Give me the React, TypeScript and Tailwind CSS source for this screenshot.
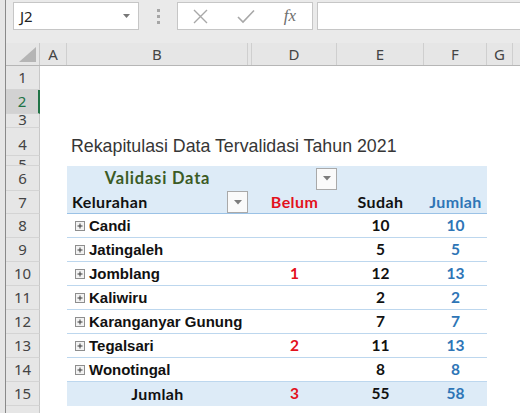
import React from 'react';

type PivotRow = { name: string; belum: string; sudah: string; jumlah: string };

const DATA: PivotRow[] = [
  { name: 'Candi', belum: '', sudah: '10', jumlah: '10' },
  { name: 'Jatingaleh', belum: '', sudah: '5', jumlah: '5' },
  { name: 'Jomblang', belum: '1', sudah: '12', jumlah: '13' },
  { name: 'Kaliwiru', belum: '', sudah: '2', jumlah: '2' },
  { name: 'Karanganyar Gunung', belum: '', sudah: '7', jumlah: '7' },
  { name: 'Tegalsari', belum: '2', sudah: '11', jumlah: '13' },
  { name: 'Wonotingal', belum: '', sudah: '8', jumlah: '8' },
];

const uiFont = { fontFamily: '"Noto Sans", "Open Sans", sans-serif' };
const calibri = { fontFamily: 'Lato, "Noto Sans", sans-serif' };
const arial = { fontFamily: '"Liberation Sans", Arial, sans-serif' };

const PIVOT = 'grid grid-cols-[181px_4px_85px_87px_63px] w-[420px]';

function RowHead({ n, selected, align = 'items-center' }: { n: number; selected?: boolean; align?: string }) {
  return (
    <div
      className={`w-[34px] shrink-0 flex justify-center overflow-hidden border-b border-[#d4d4d4] text-[15px] leading-none ${align} ${
        selected ? 'bg-[#d2d2d2] text-[#217346] border-r-2 border-r-[#217346]' : 'bg-[#e6e6e6] text-[#444] border-r border-r-[#c8c8c8]'
      }`}
      style={uiFont}
    >
      {n}
    </div>
  );
}

function DropButton() {
  return (
    <div className="w-[21px] h-[22px] border border-[#a9a9a9] bg-[#fafafa] flex items-center justify-center">
      <svg width="8" height="5" viewBox="0 0 8 5">
        <path d="M0 0h8L4 4.5z" fill="#7c7c7c" />
      </svg>
    </div>
  );
}

function PlusBox() {
  return (
    <svg width="10" height="10" viewBox="0 0 10 10" className="shrink-0">
      <rect x="0.5" y="0.5" width="9" height="9" fill="#f2f2f2" stroke="#8e8e8e" />
      <path d="M2.5 5h5M5 2.5v5" stroke="#3a3a3a" strokeWidth="1" />
    </svg>
  );
}

function EmptyRow({ n, h, selected, align }: { n: number; h: string; selected?: boolean; align?: string }) {
  return (
    <div className={`flex ${h}`}>
      <RowHead n={n} selected={selected} align={align} />
      <div className="flex-1 bg-white" />
    </div>
  );
}

function Toolbar() {
  return (
    <div className="h-[43px] bg-[#eaeaea] flex items-start pt-[2px]">
      <div className="ml-[7px] w-[126px] h-[28px] bg-white border border-[#c6c6c6] flex items-center justify-between pl-[6px] pr-[8px]">
        <span className="text-[15px] text-[#222]" style={uiFont}>J2</span>
        <svg width="7" height="4" viewBox="0 0 7 4">
          <path d="M0 0h7L3.5 4z" fill="#777" />
        </svg>
      </div>
      <div className="w-[38px] h-[28px] flex flex-col items-center justify-center gap-[3px]">
        <span className="w-[3px] h-[3px] bg-[#a6a6a6]" />
        <span className="w-[3px] h-[3px] bg-[#a6a6a6]" />
        <span className="w-[3px] h-[3px] bg-[#a6a6a6]" />
      </div>
      <div className="w-[136px] h-[28px] bg-white border border-[#c6c6c6] flex items-center">
        <div className="w-[45px] flex justify-center">
          <svg width="15" height="15" viewBox="0 0 15 15">
            <path d="M1 1l13 13M14 1L1 14" stroke="#a8a8a8" strokeWidth="1.4" />
          </svg>
        </div>
        <div className="w-[45px] flex justify-center">
          <svg width="18" height="15" viewBox="0 0 18 15">
            <path d="M1 8l5 5L17 1.5" stroke="#a8a8a8" strokeWidth="1.6" fill="none" />
          </svg>
        </div>
        <div className="w-[44px] flex justify-center">
          <span className="italic text-[17px] text-[#6e6e6e]" style={{ fontFamily: '"Liberation Serif", serif' }}>
            fx
          </span>
        </div>
      </div>
      <div className="ml-[4px] flex-1 h-[28px] bg-white border border-[#c6c6c6] border-r-0" />
    </div>
  );
}

function ColumnHeader() {
  const cell = 'h-full flex items-center justify-center border-r border-[#cfcfcf] text-[15px] text-[#444]';
  return (
    <div className="flex h-[23px] bg-[#e6e6e6] border-b border-[#b6b6b6]" style={uiFont}>
      <div className="w-[34px] h-full flex items-end justify-end pr-[3px] pb-[3px] border-r border-[#c8c8c8]">
        <svg width="17" height="15" viewBox="0 0 17 15">
          <path d="M17 0v15H0z" fill="#b5b5b5" />
        </svg>
      </div>
      <div className={`w-[27px] ${cell}`}>A</div>
      <div className={`w-[181px] ${cell}`}>B</div>
      <div className="w-[4px] h-full border-r border-[#cfcfcf]" />
      <div className={`w-[85px] ${cell}`}>D</div>
      <div className={`w-[87px] ${cell}`}>E</div>
      <div className={`w-[63px] ${cell}`}>F</div>
      <div className={`w-[26px] ${cell}`}>G</div>
      <div className="flex-1" />
    </div>
  );
}

export default function App() {
  const head = 'bg-[#ddebf7]';
  return (
    <div className="w-[520px] h-[413px] overflow-hidden flex bg-white">
      <div className="w-[6px] shrink-0 bg-[#e6e6e6] border-r border-[#8a8a8a]" />
      <div className="flex-1 flex flex-col min-w-0">
        <Toolbar />
        <ColumnHeader />
        <EmptyRow n={1} h="h-[24px]" />
        <EmptyRow n={2} h="h-[24px]" selected />
        <EmptyRow n={3} h="h-[14px]" align="items-end" />

        {/* title row */}
        <div className="flex h-[28px]">
          <RowHead n={4} align="items-end pb-[3px]" />
          <div className="w-[27px]" />
          <div className="flex-1 flex items-end pl-[4px]">
            <span className="text-[17.8px] leading-none text-[#363636] whitespace-nowrap" style={arial}>
              Rekapitulasi Data Tervalidasi Tahun 2021
            </span>
          </div>
        </div>
        <EmptyRow n={5} h="h-[10px]" align="items-start pt-[1px]" />

        {/* pivot header: column labels */}
        <div className="flex h-[25px]" style={calibri}>
          <RowHead n={6} />
          <div className="w-[27px]" />
          <div className={`${PIVOT} ${head} font-bold text-[16.5px] leading-none`}>
            <div className="flex items-center justify-center text-[#3b5b25] tracking-[0.8px]">Validasi Data</div>
            <div />
            <div className="flex items-center justify-end">
              <DropButton />
            </div>
            <div />
            <div />
          </div>
          <div className="flex-1" />
        </div>

        {/* pivot header: row labels */}
        <div className="flex h-[23px]" style={calibri}>
          <RowHead n={7} />
          <div className="w-[27px]" />
          <div className={`${PIVOT} ${head} font-bold text-[16px] leading-none tracking-[0.4px] border-b border-[#9bc2e6]`}>
            <div className="flex items-center justify-between pl-[5px] text-[#111]">
              <span>Kelurahan</span>
              <DropButton />
            </div>
            <div />
            <div className="flex items-center justify-center text-[#e3111c]">Belum</div>
            <div className="flex items-center justify-center text-[#111]">Sudah</div>
            <div className="flex items-center justify-center text-[#2e75b6]">Jumlah</div>
          </div>
          <div className="flex-1" />
        </div>

        {DATA.map((r, i) => (
          <div key={r.name} className="flex h-[24px]">
            <RowHead n={8 + i} />
            <div className="w-[27px]" />
            <div className={`${PIVOT} bg-white border-b border-[#bdd7ee] leading-none`}>
              <div className="flex items-center pl-[8px] gap-[4px] font-bold text-[15px] text-[#111] whitespace-nowrap" style={arial}>
                <PlusBox />
                <span>{r.name}</span>
              </div>
              <div />
              <div className="flex items-center justify-center font-bold text-[15.5px] text-[#e3111c]" style={calibri}>
                {r.belum}
              </div>
              <div className="flex items-center justify-center font-bold text-[15.5px] text-[#111]" style={calibri}>
                {r.sudah}
              </div>
              <div className="flex items-center justify-center font-bold text-[15.5px] text-[#2e75b6]" style={calibri}>
                {r.jumlah}
              </div>
            </div>
            <div className="flex-1" />
          </div>
        ))}

        {/* grand total */}
        <div className="flex h-[24px]" style={calibri}>
          <RowHead n={15} />
          <div className="w-[27px]" />
          <div className={`${PIVOT} ${head} font-bold leading-none`}>
            <div className="flex items-center justify-center text-[16px] tracking-[0.4px] text-[#111]">Jumlah</div>
            <div />
            <div className="flex items-center justify-center text-[15.5px] text-[#e3111c]">3</div>
            <div className="flex items-center justify-center text-[15.5px] text-[#111]">55</div>
            <div className="flex items-center justify-center text-[15.5px] text-[#2e75b6]">58</div>
          </div>
          <div className="flex-1" />
        </div>

        <div className="flex flex-1">
          <div className="w-[34px] bg-[#e6e6e6] border-r border-[#c8c8c8]" />
          <div className="flex-1" />
        </div>
      </div>
    </div>
  );
}
